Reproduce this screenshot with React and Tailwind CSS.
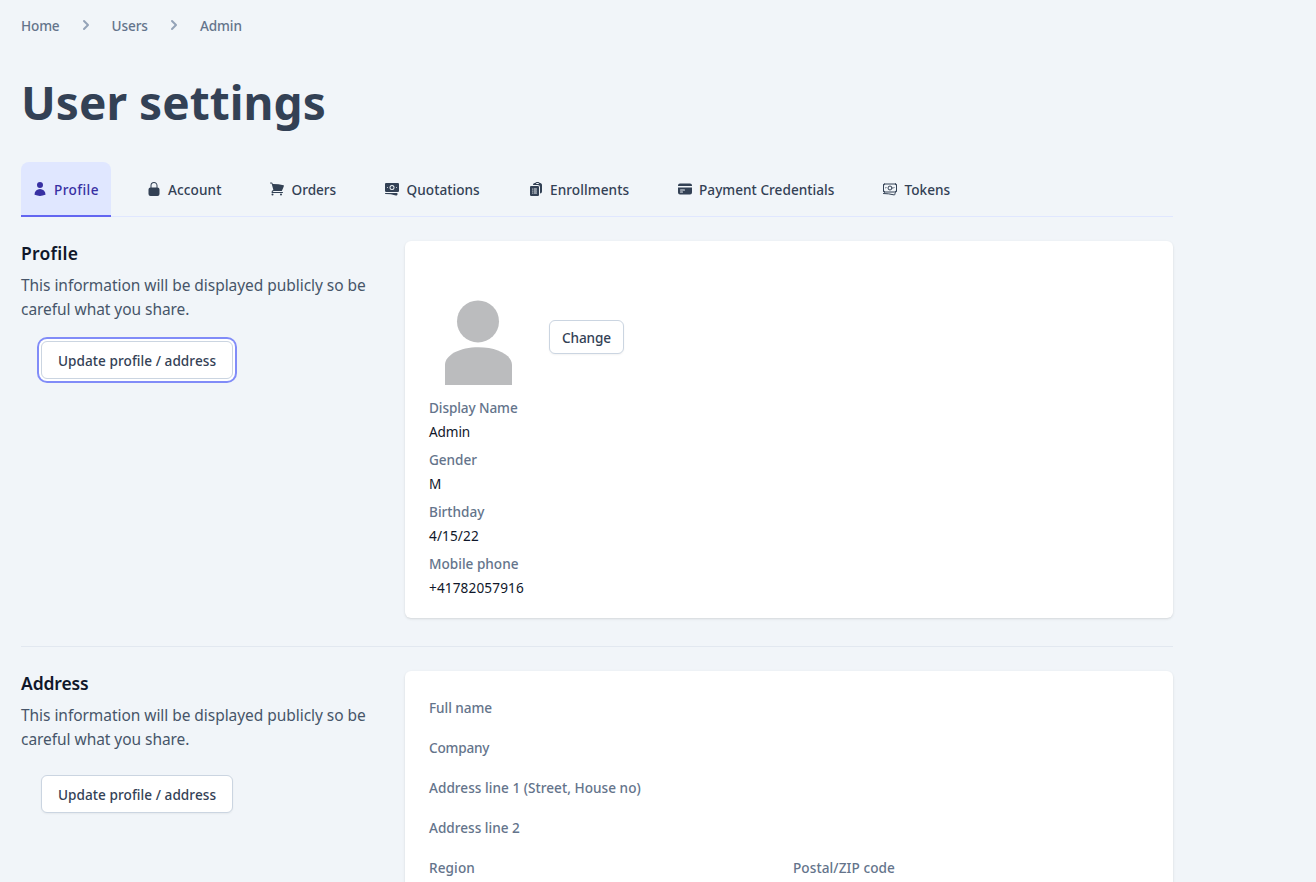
import { HiChevronRight } from 'react-icons/hi';
import {
  HiUser,
  HiLockClosed,
  HiShoppingCart,
  HiBanknotes,
  HiClipboardDocumentList,
  HiCreditCard,
  HiOutlineBanknotes,
} from 'react-icons/hi2';

const tabs = [
  { label: 'Profile', icon: HiUser, box: 'w-[90px]', track: 'tracking-[0.4px]', active: true },
  { label: 'Account', icon: HiLockClosed, box: 'w-[99.5px]', track: 'tracking-[0.1px]' },
  { label: 'Orders', icon: HiShoppingCart, box: 'w-[91px]', track: 'tracking-normal' },
  { label: 'Quotations', icon: HiBanknotes, box: 'w-[119.5px]', track: 'tracking-[0.05px]' },
  { label: 'Enrollments', icon: HiClipboardDocumentList, box: 'w-[125px]', track: 'tracking-[0.08px]' },
  { label: 'Payment Credentials', icon: HiCreditCard, box: 'w-[181.5px]', track: 'tracking-[0.03px]' },
  { label: 'Tokens', icon: HiOutlineBanknotes, box: 'w-[92px]', track: 'tracking-[0.02px]' },
];

const profileFields = [
  { label: 'Display Name', value: 'Admin', lt: 'tracking-[-0.1px]', vt: 'tracking-[-0.1px]' },
  { label: 'Gender', value: 'M', lt: 'tracking-[-0.05px]', vt: 'tracking-normal' },
  { label: 'Birthday', value: '4/15/22', lt: 'tracking-normal', vt: 'tracking-[0.12px]' },
  { label: 'Mobile phone', value: '+41782057916', lt: 'tracking-normal', vt: 'tracking-[0.13px]' },
];

const addressFields = [
  { label: 'Full name', span: 'col-span-2', track: 'tracking-[-0.07px]' },
  { label: 'Company', span: 'col-span-2', track: 'tracking-[-0.2px]' },
  { label: 'Address line 1 (Street, House no)', span: 'col-span-2', track: 'tracking-[0.03px]' },
  { label: 'Address line 2', span: 'col-span-2', track: 'tracking-normal' },
  { label: 'Region', span: 'col-span-1', track: 'tracking-[0.1px]' },
  { label: 'Postal/ZIP code', span: 'col-span-1', track: 'tracking-[0.08px]' },
];

function Breadcrumbs() {
  return (
    <nav className="flex h-5 items-center gap-4 text-[13.6px] font-medium text-[#64748b]">
      <a className="w-[38.5px] tracking-[-0.17px]">Home</a>
      <HiChevronRight className="-mt-0.5 size-5 text-[#94a3b8]" />
      <a className="w-[36.5px] tracking-[-0.08px]">Users</a>
      <HiChevronRight className="-mt-0.5 size-5 text-[#94a3b8]" />
      <a className="tracking-[-0.12px]">Admin</a>
    </nav>
  );
}

function Tabs() {
  return (
    <nav className="mt-9 flex h-[55px] gap-6 border-b border-[#e0e7ff]">
      {tabs.map(({ label, icon: Icon, box, track, active }) => (
        <a
          key={label}
          className={`-mb-px flex shrink-0 items-center whitespace-nowrap border-b-2 text-[13.6px] font-medium ${box} ${
            active
              ? 'rounded-t-lg border-[#6366f1] bg-[#e0e7ff] pl-[11px] text-[#3730a3]'
              : 'border-transparent pl-[10.5px] text-[#334155]'
          }`}
        >
          <Icon className="size-4 shrink-0" />
          <span className={`pt-[3px] ${active ? 'pl-1.5' : 'pl-[6.5px]'} ${track}`}>{label}</span>
        </a>
      ))}
    </nav>
  );
}

function Intro({ title, track, children }) {
  return (
    <div>
      <h3 className={`text-[17.5px] leading-6 font-semibold text-[#0f172a] ${track}`}>{title}</h3>
      <p className="mt-2 text-[15.5px] leading-6 tracking-[-0.05px] text-[#475569]">
        This information will be displayed publicly so be
        <br />
        careful what you share.
      </p>
      {children}
    </div>
  );
}

function UpdateButton({ className }) {
  return (
    <button
      className={`ml-5 flex h-[38px] w-48 items-center rounded-md border border-[#cbd5e1] bg-white pt-0.5 pl-4 text-[13.6px] font-medium tracking-[0.05px] whitespace-nowrap text-[#334155] shadow-xs ${className}`}
    >
      Update profile / address
    </button>
  );
}

function Avatar() {
  return (
    <svg viewBox="0 0 96 96" className="size-24" fill="#bbbcbe">
      <circle cx="49" cy="32.4" r="21" />
      <path d="M16 96V76C16 66 31 58.3 49.5 58.3S83 66 83 76V96Z" />
    </svg>
  );
}

export default function App() {
  return (
    <div className="h-[882px] overflow-hidden bg-[#f1f5f9] pt-4 pl-[21px] font-['Noto_Sans',sans-serif]">
      <div className="w-[1152px]">
        <Breadcrumbs />
        <h1 className="mt-[42px] text-[46px] leading-[48px] font-bold tracking-[0.05px] text-[#334155]">User settings</h1>
        <Tabs />

        <section className="grid grid-cols-3 border-b border-[#e2e8f0] pt-6 pb-7">
          <Intro title="Profile" track="tracking-[0.25px]">
            <UpdateButton className="mt-5 ring-2 ring-[#818cf8] ring-offset-2" />
          </Intro>
          <div className="col-span-2 h-[377px] rounded-md bg-white px-6 pt-12 shadow-sm">
            <div className="flex items-center gap-6">
              <Avatar />
              <button className="flex h-[34px] w-[75px] items-center rounded-md border border-[#cbd5e1] bg-white pt-0.5 pl-3 text-[13.6px] font-medium tracking-[-0.12px] text-[#334155] shadow-xs">
                Change
              </button>
            </div>
            <dl className="mt-[13px] flex flex-col gap-2 text-[13.6px] leading-5">
              {profileFields.map(({ label, value, lt, vt }) => (
                <div key={label}>
                  <dt className={`font-medium text-[#64748b] ${lt}`}>{label}</dt>
                  <dd className={`mt-1 text-[#0f172a] ${vt}`}>{value}</dd>
                </div>
              ))}
            </dl>
          </div>
        </section>

        <section className="grid grid-cols-3 pt-6">
          <Intro title="Address" track="tracking-[-0.12px]">
            <UpdateButton className="mt-6" />
          </Intro>
          <dl className="col-span-2 grid h-[300px] grid-cols-2 content-start gap-x-2 gap-y-5 rounded-md bg-white px-6 pt-[27px] text-[13.6px] leading-5 font-medium text-[#64748b] shadow-sm">
            {addressFields.map(({ label, span, track }) => (
              <dt key={label} className={`${span} ${track}`}>
                {label}
              </dt>
            ))}
          </dl>
        </section>
      </div>
    </div>
  );
}
